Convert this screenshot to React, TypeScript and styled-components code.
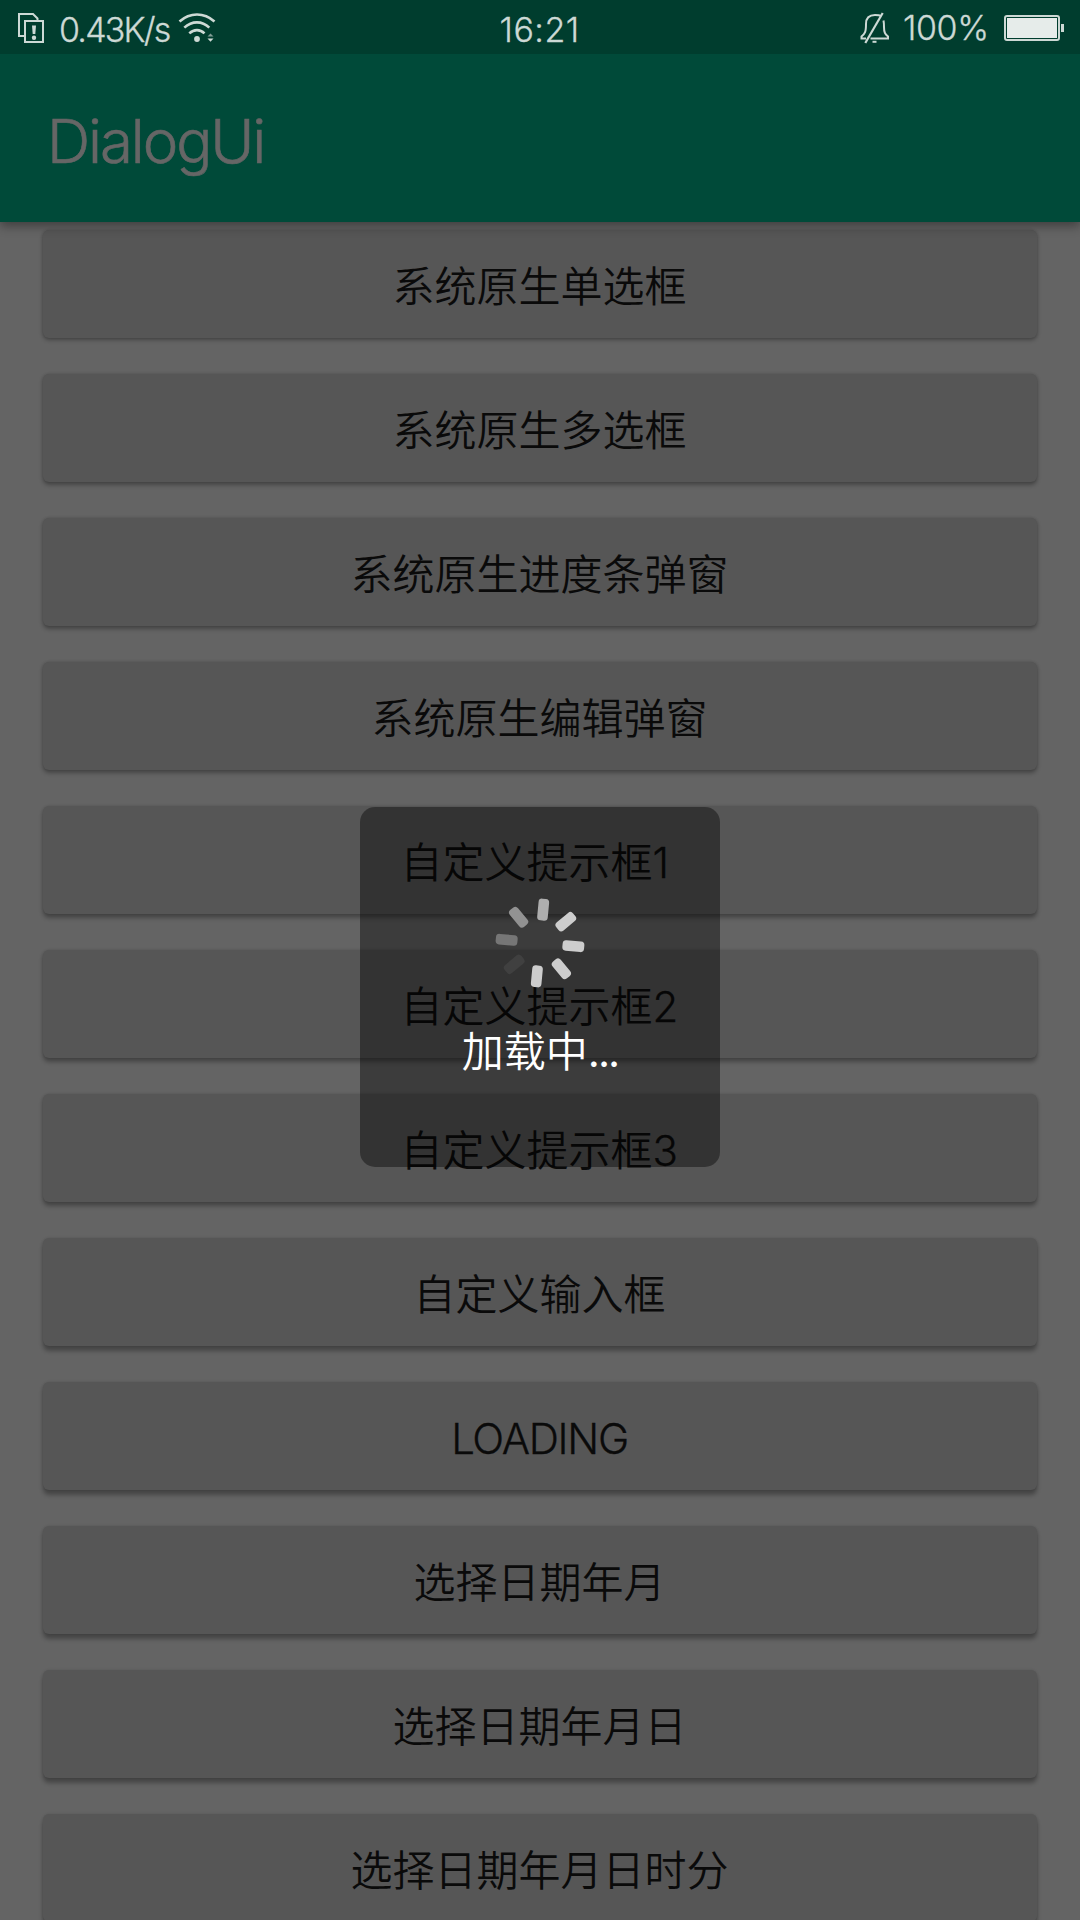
import React from 'react';
import styled, { createGlobalStyle } from 'styled-components';

const GlobalStyle = createGlobalStyle`
  * { box-sizing: border-box; }
  html, body { margin: 0; padding: 0; background: #646464; }
  body {
    overflow: hidden;
    font-family: Inter, "Noto Sans CJK SC", sans-serif;
    font-weight: 300;
  }
`;

const Screen = styled.div`
  position: relative;
  display: flex;
  flex-direction: column;
  width: 1080px;
  height: 1920px;
  overflow: hidden;
  background: #646464;
`;

const StatusBar = styled.header`
  display: grid;
  grid-template-columns: 1fr auto 1fr;
  align-items: center;
  flex: none;
  height: 54px;
  padding: 0 16px 0 17px;
  background: #003d2e;
  color: #cdd9d5;
  z-index: 2;
`;

const StatusGroup = styled.div<{ $end?: boolean }>`
  display: flex;
  align-items: center;
  justify-content: ${(p) => (p.$end ? 'flex-end' : 'flex-start')};
  height: 54px;
`;

const Label = styled.span<{ $width: number; $spacing?: number; $drop?: number }>`
  display: block;
  width: ${(p) => p.$width}px;
  padding-top: ${(p) => p.$drop ?? 0}px;
  font-size: 34px;
  line-height: 52px;
  letter-spacing: ${(p) => p.$spacing ?? 0}px;
  white-space: nowrap;
  -webkit-text-stroke: 0.3px currentColor;
`;

const Icon = styled.svg<{ $gap?: number }>`
  display: block;
  flex: none;
  margin-right: ${(p) => p.$gap ?? 0}px;
`;

const AppBar = styled.div`
  display: flex;
  align-items: center;
  flex: none;
  height: 168px;
  padding: 6px 0 0 47px;
  background: #004a39;
  box-shadow: 0 4px 10px rgba(0, 0, 0, 0.38);
  z-index: 1;
`;

const Title = styled.h1`
  margin: 0;
  font-size: 60px;
  font-weight: 300;
  line-height: 80px;
  letter-spacing: -2.1px;
  color: #666;
  -webkit-text-stroke: 0.6px #666;
`;

const List = styled.main`
  display: flex;
  flex-direction: column;
  gap: 36px;
  padding: 8px 43px 0;
`;

const Item = styled.button<{ $depth: number }>`
  display: flex;
  align-items: center;
  justify-content: center;
  flex: none;
  height: 108px;
  padding: 5px 1px 0 0;
  border: 0;
  border-radius: 6px;
  background: #565656;
  box-shadow: 0 ${(p) => 2 + p.$depth * 0.3}px 4px rgba(0, 0, 0, 0.3), 0 0 3px rgba(0, 0, 0, 0.14);
  color: #0a0a0a;
  font-family: inherit;
  font-size: 42px;
  font-weight: 350;
  line-height: 60px;
`;

const Caps = styled.span`
  font-weight: 300;
  letter-spacing: -1.3px;
  -webkit-text-stroke: 0.3px currentColor;
`;

const Digit = styled.span`
  width: 26px;
  font-weight: 300;
  text-align: left;
  -webkit-text-stroke: 0.3px currentColor;
`;

const Dots = styled.span`
  font-weight: 400;
  letter-spacing: -2px;
`;

const Dialog = styled.div`
  position: absolute;
  left: 360px;
  top: 807px;
  z-index: 3;
  display: flex;
  flex-direction: column;
  align-items: center;
  width: 360px;
  height: 360px;
  padding-top: 91px;
  border-radius: 15px;
  background: rgba(0, 0, 0, 0.4);
`;

const LoadingText = styled.p`
  margin: 34px 0 0;
  font-size: 42px;
  font-weight: 350;
  line-height: 60px;
  color: #fff;
`;

const items: { text?: string; digit?: string; caps?: string }[] = [
  { text: '系统原生单选框' },
  { text: '系统原生多选框' },
  { text: '系统原生进度条弹窗' },
  { text: '系统原生编辑弹窗' },
  { text: '自定义提示框', digit: '1' },
  { text: '自定义提示框', digit: '2' },
  { text: '自定义提示框', digit: '3' },
  { text: '自定义输入框' },
  { caps: 'LOADING' },
  { text: '选择日期年月' },
  { text: '选择日期年月日' },
  { text: '选择日期年月日时分' },
];

const spokes = ['#aeaeae', '#cdcdcd', '#cdcdcd', '#cdcdcd', '#cdcdcd', '#404040', '#767676', '#929292'];

const Spinner = () => (
  <Icon width="90" height="90" viewBox="-45 -45 90 90">
    {spokes.map((fill, i) => (
      <rect key={i} x="-5.3" y="-44.4" width="10.6" height="21.8" rx="3.6" fill={fill} transform={`rotate(${5.4 + i * 45})`} />
    ))}
  </Icon>
);

const SimIcon = () => (
  <Icon width="28" height="32" viewBox="0 0 28 32" fill="none" stroke="#cdd9d5" strokeWidth="2" $gap={14}>
    <path d="M8 24H2V2H16L20.5 6.5V9" />
    <rect x="8" y="9" width="18" height="21" />
    <path d="M15 13.5H19L18.3 22H15.7Z" fill="#cdd9d5" stroke="none" />
    <circle cx="17" cy="25.8" r="2.2" fill="#cdd9d5" stroke="none" />
  </Icon>
);

const WifiIcon = () => (
  <Icon width="38" height="32" viewBox="0 0 38 32" fill="none" stroke="#cdd9d5" strokeWidth="2.6">
    <path d="M1.5 9.5C12 .2 26 .2 36.5 9.5" />
    <path d="M6.3 15.6C14 8.6 24 8.6 31.3 15.6" />
    <path d="M11.3 21.4C16 17 22 17 26.5 21.4" />
    <circle cx="19" cy="27" r="2.9" fill="#cdd9d5" stroke="none" />
    <path d="M29.5 24.5L32.5 21.5L35.5 24.5Z" fill="#7f9b93" stroke="none" />
    <path d="M29.5 26.5H35.5L32.5 29.8Z" fill="#cdd9d5" stroke="none" />
  </Icon>
);

const BellOffIcon = () => (
  <Icon width="30" height="32" viewBox="0 0 30 32" fill="none" stroke="#cdd9d5" strokeWidth="2" $gap={13}>
    <path d="M21 3.8C19.5 3 17.5 3 15 3C8.5 3 6 7 6 12C6 20 5 21.5 1.5 24.5V26.5H6" />
    <path d="M23.5 8.5C24 11 24 13 24 15C24 20.5 25 22 28 24.5V26.5H10.5" />
    <path d="M5.3 31L22.7 1" strokeWidth="2.2" />
    <path d="M12.5 29.8H16.5" />
  </Icon>
);

const BatteryIcon = () => (
  <Icon width="60" height="28" viewBox="0 0 60 28">
    <rect x="1" y="2" width="54" height="24" rx="2" fill="none" stroke="#cdd9d5" strokeWidth="2" />
    <rect x="3" y="4" width="50" height="20" fill="#e6ecea" />
    <rect x="57" y="10" width="3" height="8" fill="#cdd9d5" />
  </Icon>
);

export default function App() {
  return (
    <Screen>
      <GlobalStyle />
      <StatusBar>
        <StatusGroup>
          <SimIcon />
          <Label $width={119} $spacing={-1.8} $drop={3}>0.43K/s</Label>
          <WifiIcon />
        </StatusGroup>
        <Label $width={82} $spacing={0.5} $drop={4}>16:21</Label>
        <StatusGroup $end>
          <BellOffIcon />
          <Label $width={101} $spacing={-0.4}>100%</Label>
          <BatteryIcon />
        </StatusGroup>
      </StatusBar>
      <AppBar>
        <Title>DialogUi</Title>
      </AppBar>
      <List>
        {items.map(({ text, digit, caps }, i) => (
          <Item key={i} $depth={i}>
            {text}
            {digit && <Digit>{digit}</Digit>}
            {caps && <Caps>{caps}</Caps>}
          </Item>
        ))}
      </List>
      <Dialog>
        <Spinner />
        <LoadingText>
          加载中<Dots>...</Dots>
        </LoadingText>
      </Dialog>
    </Screen>
  );
}
